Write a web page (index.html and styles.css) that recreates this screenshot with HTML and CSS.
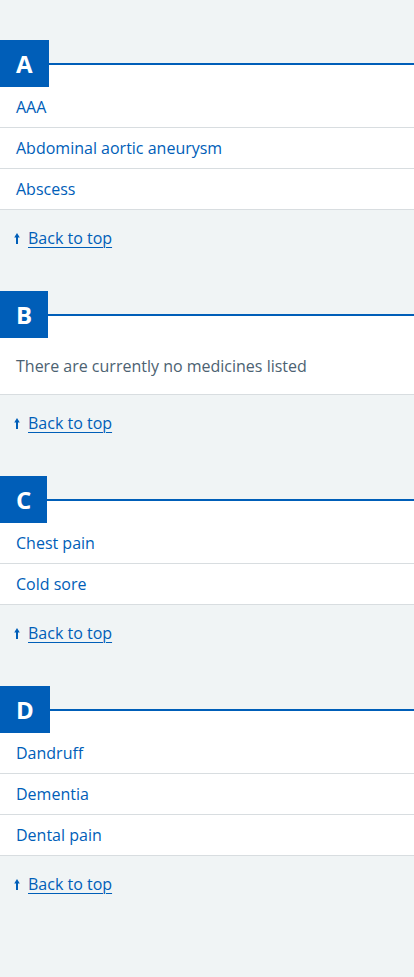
FILE: index.html
```html
<!DOCTYPE html>
<html lang="en">
<head>
<meta charset="utf-8">
<title>A to Z</title>
<link rel="stylesheet" href="styles.css">
</head>
<body>
<main class="page">
  <section class="az" id="A">
    <h2 class="letter">A</h2>
    <ul class="az-list">
      <li><a href="#">AAA</a></li>
      <li><a href="#">Abdominal aortic aneurysm</a></li>
      <li><a href="#">Abscess</a></li>
    </ul>
  </section>
  <div class="back"><svg class="arrow" width="6" height="11" viewBox="0 0 6 11"><path d="M3 0 L5.8 4.4 L4 4.4 L4 11 L2 11 L2 4.4 L0.2 4.4 Z" fill="#005eb8"/></svg><a href="#">Back to top</a></div>

  <section class="az" id="B">
    <h2 class="letter">B</h2>
    <p class="empty">There are currently no medicines listed</p>
  </section>
  <div class="back"><svg class="arrow" width="6" height="11" viewBox="0 0 6 11"><path d="M3 0 L5.8 4.4 L4 4.4 L4 11 L2 11 L2 4.4 L0.2 4.4 Z" fill="#005eb8"/></svg><a href="#">Back to top</a></div>

  <section class="az" id="C">
    <h2 class="letter">C</h2>
    <ul class="az-list">
      <li><a href="#">Chest pain</a></li>
      <li><a href="#">Cold sore</a></li>
    </ul>
  </section>
  <div class="back"><svg class="arrow" width="6" height="11" viewBox="0 0 6 11"><path d="M3 0 L5.8 4.4 L4 4.4 L4 11 L2 11 L2 4.4 L0.2 4.4 Z" fill="#005eb8"/></svg><a href="#">Back to top</a></div>

  <section class="az" id="D">
    <h2 class="letter">D</h2>
    <ul class="az-list">
      <li><a href="#">Dandruff</a></li>
      <li><a href="#">Dementia</a></li>
      <li><a href="#">Dental pain</a></li>
    </ul>
  </section>
  <div class="back"><svg class="arrow" width="6" height="11" viewBox="0 0 6 11"><path d="M3 0 L5.8 4.4 L4 4.4 L4 11 L2 11 L2 4.4 L0.2 4.4 Z" fill="#005eb8"/></svg><a href="#">Back to top</a></div>
</main>
</body>
</html>
```

FILE: styles.css
```css
html, body {
  margin: 0;
  padding: 0;
  background: #f0f4f5;
}
body {
  font-family: "Open Sans", "Noto Sans", sans-serif;
  font-size: 16px;
  color: #212b32;
  min-height: 977px;
}
.page {
  padding-top: 40px;
}
.az {
  display: flex;
  flex-direction: column;
  align-items: flex-start;
  background: linear-gradient(to bottom, transparent 0, transparent 23px, #005eb8 23px, #005eb8 25px, #ffffff 25px);
}
.letter {
  margin: 0;
  height: 47px;
  line-height: 47px;
  padding: 0 16px;
  background: #005eb8;
  color: #ffffff;
  font-size: 24px;
  font-weight: 700;
}
.az-list {
  align-self: stretch;
  list-style: none;
  margin: 0;
  padding: 0;
}
.az-list li {
  height: 40px;
  line-height: 40px;
  padding: 0 16px;
  border-bottom: 1px solid #d8dde0;
}
.az-list a {
  color: #005eb8;
  text-decoration: none;
}
.empty {
  align-self: stretch;
  margin: 0;
  padding: 16px;
  line-height: 24px;
  color: #4c6272;
  border-bottom: 1px solid #d8dde0;
}
.back {
  display: flex;
  align-items: center;
  gap: 8px;
  padding: 16px 14px 0;
  line-height: 24px;
  margin-bottom: 41px;
}
.back a {
  color: #005eb8;
  text-decoration: underline;
  text-underline-offset: 3px;
  text-decoration-thickness: 1px;
}
.arrow {
  display: block;
  margin-top: 1px;
}
```
